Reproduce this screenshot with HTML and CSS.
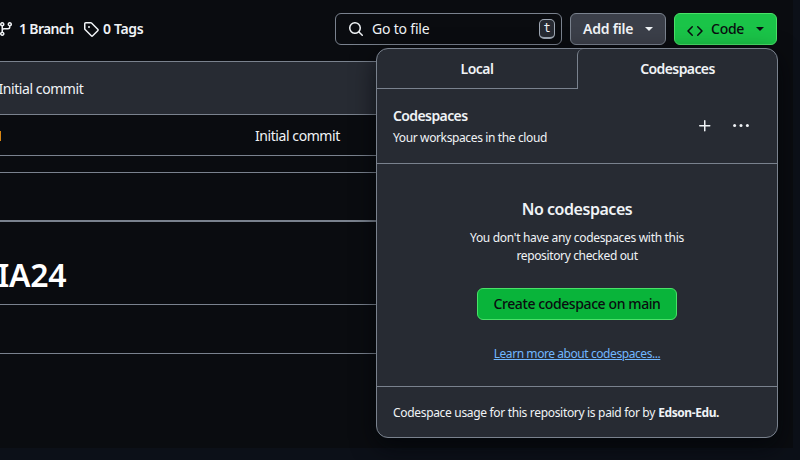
FILE: index.html
```
<!DOCTYPE html>
<html lang="en">
<head>
<meta charset="utf-8">
<title>Repository</title>
<link rel="stylesheet" href="styles.css">
</head>
<body>
<main class="page">
  <header class="toolbar">
    <a class="ref branch"><svg class="branch-icon" width="16" height="16" viewBox="0 0 16 16"><path d="M9.5 3.25a2.25 2.25 0 1 1 3 2.122V6A2.5 2.5 0 0 1 10 8.500H6a1 1 0 0 0-1 1v1.128a2.251 2.251 0 1 1-1.500 0V5.372a2.250 2.250 0 1 1 1.500 0v1.836A2.493 2.493 0 0 1 6 7h4a1 1 0 0 0 1-1v-.628A2.250 2.250 0 0 1 9.500 3.250Zm-6 0a.75.75 0 1 0 1.500 0 .75.75 0 0 0-1.500 0Zm8.250-.75a.75.75 0 1 0 0 1.500.75.75 0 0 0 0-1.500ZM4.250 12a.75.75 0 1 0 0 1.500.75.75 0 0 0 0-1.500Z"/></svg><span class="t-branch">1 Branch</span></a>
    <a class="ref tags"><svg width="16" height="16" viewBox="0 0 16 16"><path d="M1 7.775V2.750C1 1.784 1.784 1 2.750 1h5.025c.464 0 .91.184 1.238.513l6.250 6.250a1.750 1.750 0 0 1 0 2.474l-5.026 5.026a1.750 1.750 0 0 1-2.474 0l-6.250-6.250A1.752 1.752 0 0 1 1 7.775Zm1.500 0c0 .066.026.13.073.177l6.250 6.250a.25.25 0 0 0 .354 0l5.025-5.025a.25.25 0 0 0 0-.354l-6.250-6.250a.25.25 0 0 0-.177-.073H2.750a.25.25 0 0 0-.25.25ZM6 5a1 1 0 1 1 0 2 1 1 0 0 1 0-2Z"/></svg><span class="t-tags">0 Tags</span></a>
    <div class="search"><svg width="16" height="16" viewBox="0 0 16 16"><path d="M10.680 11.740a6 6 0 0 1-7.922-8.982 6 6 0 0 1 8.982 7.922l3.040 3.040a.749.749 0 1 1-1.060 1.060ZM11.500 7a4.499 4.499 0 1 0-8.997 0A4.499 4.499 0 0 0 11.500 7Z"/></svg><span class="t-goto">Go to file</span><kbd>t</kbd></div>
    <button class="btn add"><span class="t-add">Add file</span><i class="caret"></i></button>
    <button class="btn code"><svg width="16" height="16" viewBox="0 0 16 16"><path d="m11.280 3.220 4.250 4.250a.75.75 0 0 1 0 1.060l-4.250 4.250a.749.749 0 1 1-1.060-1.060L13.940 8l-3.720-3.720a.749.749 0 1 1 1.060-1.060Zm-6.560 0a.751.751 0 0 1 1.060 1.060L2.060 8l3.720 3.720a.749.749 0 1 1-1.060 1.060L.47 8.530a.75.75 0 0 1 0-1.060Z"/></svg><span class="t-code">Code</span><i class="caret"></i></button>
  </header>
  <section class="files">
    <div class="commit"><span class="t-commit">Initial commit</span></div>
    <div class="file"><i class="mark"></i><span class="t-commit">Initial commit</span></div>
  </section>
  <section class="readme">
    <div class="readme-tabs"></div>
    <h1><span class="t-h1">IA24</span></h1>
    <div class="readme-body"></div>
  </section>
</main>
<aside class="menu">
  <nav class="tabs">
    <div class="tab"><span class="t-local">Local</span></div>
    <div class="tab active"><span class="t-cs">Codespaces</span></div>
  </nav>
  <div class="menu-head">
    <div class="titles"><strong class="t-cs">Codespaces</strong><span class="t-work">Your workspaces in the cloud</span></div>
    <svg class="plus" width="16" height="16" viewBox="0 0 16 16"><path d="M7.750 2a.75.75 0 0 1 .75.75V7h4.250a.75.75 0 0 1 0 1.500H8.500v4.250a.75.75 0 0 1-1.500 0V8.500H2.750a.75.75 0 0 1 0-1.500H7V2.750A.75.75 0 0 1 7.750 2Z"/></svg>
    <svg class="dots" width="20" height="16" viewBox="0 0 20 16"><circle cx="3.600" cy="7.500" r="1.500"/><circle cx="10" cy="7.500" r="1.500"/><circle cx="16.400" cy="7.500" r="1.500"/></svg>
  </div>
  <div class="blank">
    <h2><span class="t-none">No codespaces</span></h2>
    <p><span class="t-you">You don't have any codespaces with this</span><br><span class="t-repo">repository checked out</span></p>
    <button class="create"><span class="t-create">Create codespace on main</span></button>
    <a class="learn"><span class="t-learn">Learn more about codespaces...</span></a>
  </div>
  <footer><span class="t-usage">Codespace usage for this repository is paid for by</span> <b class="t-edson">Edson-Edu.</b></footer>
</aside>
</body>
</html>
```
FILE: styles.css
```
* { box-sizing: border-box; }
body {
  margin: 0;
  width: 800px;
  height: 460px;
  overflow: hidden;
  background: #0c1018;
  color: #f0f3f6;
  font: 14px/20px "Noto Sans", "Open Sans", sans-serif;
}
svg { fill: currentColor; flex: none; }
span, strong, b { white-space: nowrap; }
.page { width: 793px; height: 448px; background: #0a0c10; }

/* Tracking per label */
.t-branch { letter-spacing: -.66px; }
.t-tags { letter-spacing: -.35px; }
.t-goto, .t-add { letter-spacing: -.2px; }
.t-code { letter-spacing: -.25px; }
.t-commit { letter-spacing: -.43px; }
.t-h1 { letter-spacing: -.3px; }
.t-local { letter-spacing: -.5px; }
.t-cs { letter-spacing: -.6px; }
.t-work { letter-spacing: -.375px; }
.t-none { letter-spacing: -.46px; }
.t-you { letter-spacing: -.31px; }
.t-repo { letter-spacing: -.36px; }
.t-create { letter-spacing: -.4px; }
.t-learn { letter-spacing: -.43px; }
.t-usage { letter-spacing: -.32px; }
.t-edson { letter-spacing: -.4px; }

.toolbar { display: flex; align-items: center; height: 61px; padding: 0 16px 3px 0; }
.ref { display: flex; align-items: center; font-weight: 600; }
.branch { width: 83px; gap: 5px; }
.branch-icon { margin-left: -2px; }
.tags { width: 252px; gap: 4px; }
.search {
  display: flex;
  align-items: center;
  width: 227px;
  height: 32px;
  padding: 0 6px 0 12px;
  border: 1px solid #7a828e;
  border-radius: 6px;
}
.search span { margin-left: 8px; }
kbd {
  width: 16px;
  height: 20px;
  margin-left: auto;
  border: 1px solid #9ea7b3;
  border-bottom-width: 2px;
  border-radius: 5px;
  background: #272b33;
  font: 12px/17px "DejaVu Sans Mono", monospace;
  text-align: center;
}
.btn {
  display: flex;
  align-items: center;
  height: 32px;
  margin: 0 0 0 8px;
  padding: 0 12px;
  border: 1px solid #7a828e;
  border-radius: 6px;
  background: #3b3f49;
  color: #f0f3f6;
  font: 600 14px/20px "Noto Sans", sans-serif;
}
.add { width: 96px; }
.code { width: 103px; border-color: #4ae168; background: #1ac448; color: #0a0c10; font-weight: 500; }
.code svg { position: relative; top: 2px; margin-right: 8px; }
.caret {
  margin-left: auto;
  border: 4px solid transparent;
  border-top-color: currentColor;
  border-bottom: 0;
}

.files, .readme { width: 760px; }
.files { height: 95px; border-top: 1px solid #7a828e; border-bottom: 1px solid #7a828e; }
.commit { height: 53px; padding-top: 17px; border-bottom: 1px solid #7a828e; background: #272b33; }
.commit span { margin-left: -1.5px; }
.file { display: flex; align-items: center; height: 40px; padding-top: 1px; }
.mark { width: 1px; height: 10px; margin-right: 254px; background: #d88613; }
.readme { margin-top: 16px; border-top: 1px solid #7a828e; }
.readme-tabs { height: 49px; border-bottom: 2px solid #7a828e; }
h1 {
  height: 83px;
  margin: 0;
  padding-top: 33px;
  border-bottom: 1px solid #7a828e;
  color: #fff;
  font-size: 32px;
  font-weight: 600;
  line-height: 40px;
}
h1 span { margin-left: -2.5px; }
.readme-body { height: 49px; border-bottom: 1px solid #7a828e; }

.menu {
  position: absolute;
  left: 376px;
  top: 48px;
  width: 402px;
  height: 390px;
  overflow: hidden;
  border: 1px solid #7a828e;
  border-radius: 12px;
  background: #272b33;
  box-shadow: 0 8px 24px #010409aa;
}
.tabs { display: flex; height: 40px; }
.tab { width: 200px; padding-top: 10px; border-bottom: 1px solid #7a828e; text-align: center; font-weight: 600; }
.active { flex: 1; border-bottom: 0; border-left: 1px solid #7a828e; border-top-left-radius: 6px; }
.menu-head { display: flex; align-items: center; height: 75px; padding: 0 26px 0 16px; border-bottom: 1px solid #7a828e; }
.titles { display: flex; flex: 1; flex-direction: column; gap: 2px; padding-top: 2px; }
.titles strong { font-weight: 600; }
.titles span, p, .learn, footer { font-size: 12px; }
.plus { margin-right: 18px; }
.blank { display: flex; flex-direction: column; align-items: center; height: 223px; padding-top: 33px; border-bottom: 1px solid #7a828e; }
h2 { margin: 0; font-size: 16px; font-weight: 600; line-height: 24px; }
p { margin: 8px 0 0; line-height: 18px; text-align: center; }
.create {
  width: 200px;
  height: 32px;
  margin-top: 23px;
  padding: 0;
  border: 1px solid #4ae168;
  border-radius: 6px;
  background: #09b43a;
  color: #0a0c10;
  font: 500 14px/20px "Noto Sans", sans-serif;
}
.learn { margin-top: 24px; color: #71b7ff; text-decoration: underline; }
footer { padding: 16px; white-space: nowrap; }
```
